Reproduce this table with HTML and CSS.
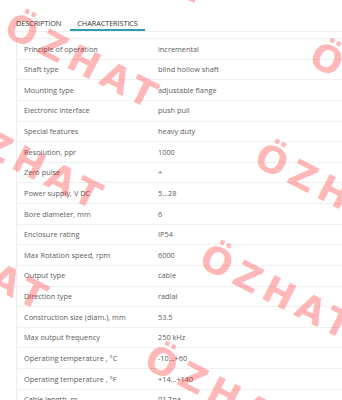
FILE: index.html
```html
<!DOCTYPE html>
<html lang="en">
<head>
<meta charset="utf-8">
<title>Characteristics</title>
<link rel="stylesheet" href="styles.css">
</head>
<body>
<div class="page">
  <div class="tabs">
    <span class="tab">DESCRIPTION</span>
    <span class="tab active">CHARACTERISTICS</span>
  </div>
  <div class="panel">
    <table class="specs">
      <tr><td class="lbl">Principle of operation</td><td>incremental</td></tr>
      <tr><td class="lbl">Shaft type</td><td>blind hollow shaft</td></tr>
      <tr><td class="lbl">Mounting type</td><td>adjustable flange</td></tr>
      <tr><td class="lbl">Electronic interface</td><td>push pull</td></tr>
      <tr><td class="lbl">Special features</td><td>heavy duty</td></tr>
      <tr><td class="lbl">Resolution, ppr</td><td>1000</td></tr>
      <tr><td class="lbl">Zero pulse</td><td>+</td></tr>
      <tr><td class="lbl">Power supply, V DC</td><td>5...28</td></tr>
      <tr><td class="lbl">Bore diameter, mm</td><td>6</td></tr>
      <tr><td class="lbl">Enclosure rating</td><td>IP54</td></tr>
      <tr><td class="lbl">Max Rotation speed, rpm</td><td>6000</td></tr>
      <tr><td class="lbl">Output type</td><td>cable</td></tr>
      <tr><td class="lbl">Direction type</td><td>radial</td></tr>
      <tr><td class="lbl">Construction size (diam.), mm</td><td>53.5</td></tr>
      <tr><td class="lbl">Max output frequency</td><td>250 kHz</td></tr>
      <tr><td class="lbl">Operating temperature , °C</td><td>-10...+60</td></tr>
      <tr><td class="lbl">Operating temperature , °F</td><td>+14...+140</td></tr>
      <tr><td class="lbl">Cable length, m</td><td>01 Тра</td></tr>
    </table>
  </div>
  <div class="watermark" aria-hidden="true">
    <span class="wm" style="left:70.3px;top:-95.5px">ÖZHAT</span>
    <span class="wm" style="left:16.3px;top:6.5px">ÖZHAT</span>
    <span class="wm" style="left:-38.7px;top:107.5px">ÖZHAT</span>
    <span class="wm" style="left:-93.7px;top:208.5px">ÖZHAT</span>
    <span class="wm" style="left:321.3px;top:35.5px">ÖZHAT</span>
    <span class="wm" style="left:266.3px;top:136.5px">ÖZHAT</span>
    <span class="wm" style="left:211.3px;top:237.5px">ÖZHAT</span>
    <span class="wm" style="left:156.3px;top:338.5px">ÖZHAT</span>
  </div>
</div>
</body>
</html>
```

FILE: styles.css
```css
html, body {
  margin: 0;
  padding: 0;
  overflow: hidden;
  background: #fff;
}

.page {
  position: relative;
  width: 342px;
  height: 400px;
  overflow: hidden;
  font-family: "Open Sans", "DejaVu Sans", sans-serif;
  font-size: 7.35px;
}

.tabs {
  display: flex;
  gap: 2px;
  margin-top: 13px;
  margin-left: 16px;
  border-bottom: 1px solid #efefef;
}

.tab {
  padding: 5px 7px 1px;
  line-height: 10px;
  color: #333;
  border-bottom: 2px solid transparent;
  letter-spacing: -0.1px;
}

.tab:first-child {
  padding-left: 0;
}

.tab.active {
  border-bottom-color: #2c9cb6;
}

.panel {
  padding-top: 6px;
  padding-left: 16px;
}

.specs {
  width: 340px;
  border-collapse: collapse;
  border-top: 1px solid #efefef;
  border-left: 1px solid #ececec;
  color: #5c5c5c;
}

.specs td {
  padding: 4.5px 7px 4.5px 7px;
  line-height: 10.63px;
  border-bottom: 1px solid #f0f0f0;
  white-space: nowrap;
  text-align: left;
  vertical-align: middle;
}

.specs td.lbl {
  width: 120px;
}

.watermark {
  position: absolute;
  left: 0;
  top: 0;
  width: 342px;
  height: 400px;
  overflow: hidden;
  pointer-events: none;
}

.wm {
  position: absolute;
  display: block;
  white-space: nowrap;
  font-family: "DejaVu Sans", sans-serif;
  font-weight: bold;
  font-size: 37px;
  line-height: 1;
  letter-spacing: 6px;
  color: rgba(255, 0, 0, 0.3);
  transform: rotate(27deg);
  transform-origin: 0 0;
}
```
